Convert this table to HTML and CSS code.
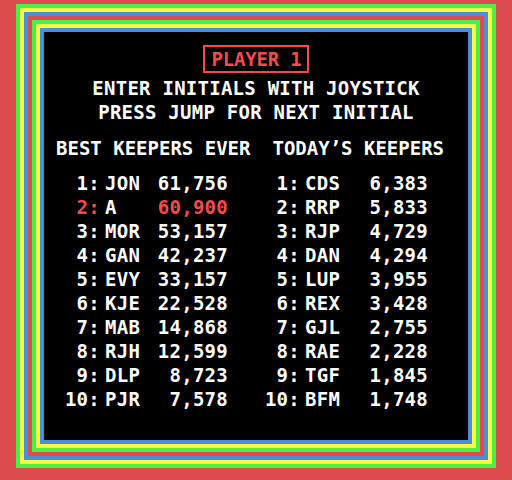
FILE: index.html
```html
<!DOCTYPE html>
<html>
<head>
<meta charset="utf-8">
<link rel="stylesheet" href="styles.css">
</head>
<body>
<div class="screen">
  <div class="title"><span class="player">PLAYER 1</span></div>
  <p class="msg">ENTER INITIALS WITH JOYSTICK<br>PRESS JUMP FOR NEXT INITIAL</p>
  <div class="heads">
    <h2 class="head">BEST KEEPERS EVER</h2>
    <h2 class="head">TODAY’S KEEPERS</h2>
  </div>
  <div class="tables">
    <ol class="board">
      <li class="row"><span class="rank">1:</span><span class="name">JON</span><span class="score">61,756</span></li>
      <li class="row hl"><span class="rank">2:</span><span class="name">A</span><span class="score">60,900</span></li>
      <li class="row"><span class="rank">3:</span><span class="name">MOR</span><span class="score">53,157</span></li>
      <li class="row"><span class="rank">4:</span><span class="name">GAN</span><span class="score">42,237</span></li>
      <li class="row"><span class="rank">5:</span><span class="name">EVY</span><span class="score">33,157</span></li>
      <li class="row"><span class="rank">6:</span><span class="name">KJE</span><span class="score">22,528</span></li>
      <li class="row"><span class="rank">7:</span><span class="name">MAB</span><span class="score">14,868</span></li>
      <li class="row"><span class="rank">8:</span><span class="name">RJH</span><span class="score">12,599</span></li>
      <li class="row"><span class="rank">9:</span><span class="name">DLP</span><span class="score">8,723</span></li>
      <li class="row"><span class="rank">10:</span><span class="name">PJR</span><span class="score">7,578</span></li>
    </ol>
    <ol class="board">
      <li class="row"><span class="rank">1:</span><span class="name">CDS</span><span class="score">6,383</span></li>
      <li class="row"><span class="rank">2:</span><span class="name">RRP</span><span class="score">5,833</span></li>
      <li class="row"><span class="rank">3:</span><span class="name">RJP</span><span class="score">4,729</span></li>
      <li class="row"><span class="rank">4:</span><span class="name">DAN</span><span class="score">4,294</span></li>
      <li class="row"><span class="rank">5:</span><span class="name">LUP</span><span class="score">3,955</span></li>
      <li class="row"><span class="rank">6:</span><span class="name">REX</span><span class="score">3,428</span></li>
      <li class="row"><span class="rank">7:</span><span class="name">GJL</span><span class="score">2,755</span></li>
      <li class="row"><span class="rank">8:</span><span class="name">RAE</span><span class="score">2,228</span></li>
      <li class="row"><span class="rank">9:</span><span class="name">TGF</span><span class="score">1,845</span></li>
      <li class="row"><span class="rank">10:</span><span class="name">BFM</span><span class="score">1,748</span></li>
    </ol>
  </div>
</div>
</body>
</html>
```

FILE: styles.css
```css
html, body {
  margin: 0;
}
body {
  background: #dc4c4c;
  height: 480px;
  box-sizing: border-box;
  padding: 32px 44px 0;
  overflow: hidden;
  font-family: "DejaVu Sans Mono", "Liberation Mono", monospace;
  font-weight: bold;
  font-size: 19px;
  letter-spacing: 0.25px;
  line-height: 24px;
  color: #ffffff;
}
.screen {
  height: 408px;
  box-sizing: border-box;
  padding-top: 13px;
  background: #000000;
  box-shadow:
    0 0 0 4px #4890d8,
    0 0 0 8px #f8f848,
    0 0 0 12px #48f048,
    0 0 0 16px #dc4c4c,
    0 0 0 20px #4890d8,
    0 0 0 24px #f8f848,
    0 0 0 28px #48f048;
}
.title {
  text-align: center;
}
.player {
  display: inline-block;
  border: 2px solid #f44c4c;
  color: #f44c4c;
  padding: 0 6px 0 7px;
  letter-spacing: -0.2px;
}
.msg {
  margin: 3px 0 0;
  text-align: center;
}
.heads {
  display: flex;
  gap: 22px;
  margin-top: 12px;
  padding-left: 12px;
  letter-spacing: 0;
}
.head {
  margin: 0;
  font-size: inherit;
  font-weight: inherit;
}
.tables {
  display: flex;
  gap: 36px;
  margin-top: 11px;
  padding-left: 20px;
}
.board {
  list-style: none;
  margin: 0;
  padding: 0;
  width: 164px;
}
.row {
  display: grid;
  grid-template-columns: 36px 1fr auto;
  column-gap: 5px;
}
.rank, .score {
  text-align: right;
}
.hl .rank, .hl .score {
  color: #f44c4c;
}
```
